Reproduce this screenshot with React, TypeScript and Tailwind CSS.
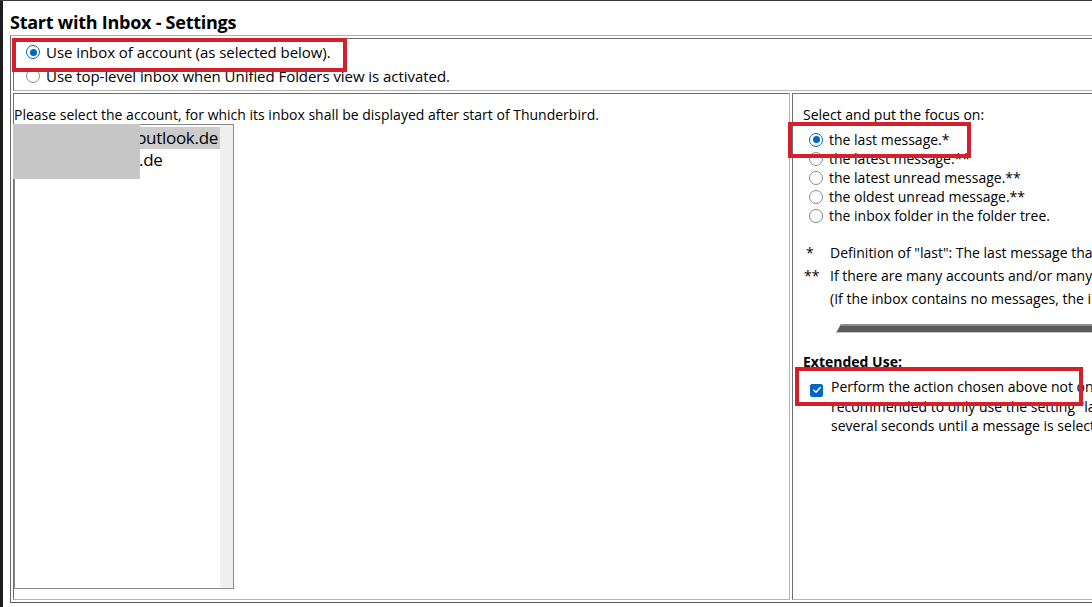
import React from "react";

const font = { fontFamily: '"Open Sans", "Noto Sans", sans-serif' };

function Radio({ checked }: { checked?: boolean }) {
  return checked ? (
    <span className="inline-flex h-[14px] w-[14px] shrink-0 items-center justify-center rounded-full border-[1.5px] border-[#0067c0] bg-white">
      <span className="h-[7px] w-[7px] rounded-full bg-[#0067c0]" />
    </span>
  ) : (
    <span className="inline-block h-[14px] w-[14px] shrink-0 rounded-full border border-[#8a8a8a] bg-white" />
  );
}

function Check() {
  return (
    <span className="inline-flex h-[13px] w-[13px] shrink-0 items-center justify-center rounded-[2px] bg-[#0067c0]">
      <svg width="10" height="10" viewBox="0 0 10 10" fill="none">
        <path d="M1.8 5.2 L4 7.3 L8.3 2.6" stroke="white" strokeWidth="1.5" strokeLinecap="round" strokeLinejoin="round" />
      </svg>
    </span>
  );
}

function RadioRow({ checked, children, className }: { checked?: boolean; children: React.ReactNode; className?: string }) {
  return (
    <div className={"flex items-center gap-[6px] whitespace-nowrap " + (className ?? "")}>
      <Radio checked={checked} />
      <span>{children}</span>
    </div>
  );
}

export default function App() {
  return (
    <div
      className="relative flex h-[607px] w-[1092px] overflow-hidden border-t border-[#3a3a3a] bg-white text-black"
      style={font}
    >
      <div className="w-[3px] shrink-0 bg-[#1e1e1e]" />
      <div className="flex min-w-0 flex-1 flex-col pl-[7px]">
        <h1 className="pt-[9px] text-[18px] font-bold leading-[24px] tracking-[-0.25px]">Start with Inbox - Settings</h1>

        {/* outer table frame */}
        <div className="mt-[1px] flex w-[1200px] flex-col gap-[2px] border-l border-t border-b border-l-[#6a6a6a] border-t-[#b0b0b0] border-b-[#555] p-[2px] pr-0">
          {/* mode choice */}
          <div className="h-[53px] border border-t-[#6e6e6e] border-l-[#6e6e6e] border-b-[#b4b4b4] border-r-[#b4b4b4] pl-[12px] pt-[1px] text-[15px] leading-[24px] tracking-[-0.05px]">
            <RadioRow checked>Use inbox of account (as selected below).</RadioRow>
            <RadioRow>Use top-level inbox when Unified Folders view is activated.</RadioRow>
          </div>

          <div className="flex h-[507px] gap-[2px]">
            {/* account list */}
            <div className="flex w-[777px] shrink-0 flex-col border border-t-[#6e6e6e] border-l-[#6e6e6e] border-b-[#b4b4b4] border-r-[#b4b4b4] text-[14px]">
              <div className="pt-[11px] leading-[19px]">
                Please select the account, for which its inbox shall be displayed after start of Thunderbird.
              </div>
              <div className="relative mb-[10px] flex h-[465px] w-[220px] border border-[#8c8c8c] bg-white">
                <div className="flex-1 pt-[2px] text-[17px] leading-[22px] tracking-[-0.3px]">
                  <div className="bg-[#cccccc] pr-[2px] text-right">outlook.de</div>
                  <div className="pl-[124px]">.de</div>
                </div>
                <div className="w-[13px] bg-[#efefef]" />
                <div className="absolute -left-[2px] -top-[1px] h-[55px] w-[127px] bg-[#c6c6c6]" />
              </div>
            </div>

            {/* focus choice */}
            <div className="flex-1 border border-t-[#6e6e6e] border-l-[#6e6e6e] border-b-[#b4b4b4] pl-[10px] text-[14px]">
              <div className="pt-[11px] leading-[19px]">Select and put the focus on:</div>
              <div className="mt-[6px] pl-[6px] leading-[19px]">
                <RadioRow checked>the last message.*</RadioRow>
                <RadioRow>the latest message.**</RadioRow>
                <RadioRow>the latest unread message.**</RadioRow>
                <RadioRow>the oldest unread message.**</RadioRow>
                <RadioRow>the inbox folder in the folder tree.</RadioRow>
              </div>

              <div className="mt-[16px] whitespace-nowrap leading-[23px]">
                <div className="flex">
                  <span className="w-[27px] pl-[3px]">*</span>
                  <span>Definition of "last": The last message that was selected before Thunderbird was closed.</span>
                </div>
                <div className="flex">
                  <span className="w-[27px] pl-[1px]">**</span>
                  <span>If there are many accounts and/or many folders, it may take a while until the message is shown.</span>
                </div>
                <div className="pl-[27px]">(If the inbox contains no messages, the inbox folder is shown.)</div>
              </div>

              <div className="ml-[33px] mt-[14px] h-[9px] border-t-[2px] border-b border-t-[#8e8e8e] border-b-[#c8c8c8] bg-[#5a5a5a] [clip-path:polygon(5px_0,100%_0,100%_100%,0_100%)]" />

              <div className="mt-[19px] font-bold leading-[19px]">Extended Use:</div>
              <div className="mt-[6px] flex whitespace-nowrap pl-[7px] leading-[19.5px]">
                <span className="pt-[3px]">
                  <Check />
                </span>
                <div className="pl-[8px]">
                  <div>Perform the action chosen above not only at start, but also when the main window is opened again. It is</div>
                  <div>recommended to only use the setting "last message" here, since other settings may take</div>
                  <div>several seconds until a message is selected.</div>
                </div>
              </div>
            </div>
          </div>
        </div>
      </div>

      {/* red highlight frames */}
      <div className="pointer-events-none absolute left-[12px] top-[37px] h-[34px] w-[335px] border-[4px] border-[#d4202c]" />
      <div className="pointer-events-none absolute left-[788px] top-[121px] h-[36px] w-[183px] border-[4px] border-[#d4202c]" />
      <div className="pointer-events-none absolute left-[795px] top-[366px] h-[39px] w-[288px] border-[4px] border-[#d4202c]" />
    </div>
  );
}
